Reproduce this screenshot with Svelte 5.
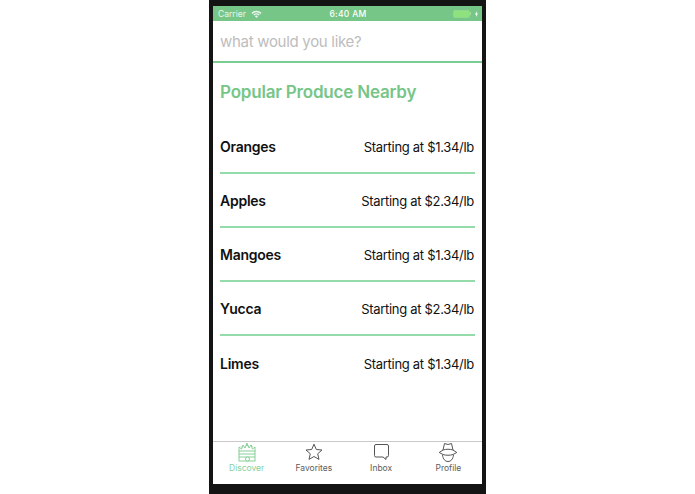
<script>
  const rows = [
    { name: 'Oranges', price: 'Starting at $1.34/lb' },
    { name: 'Apples', price: 'Starting at $2.34/lb' },
    { name: 'Mangoes', price: 'Starting at $1.34/lb' },
    { name: 'Yucca', price: 'Starting at $2.34/lb' },
    { name: 'Limes', price: 'Starting at $1.34/lb' }
  ];
</script>

<div class="page">
  <div class="phone">
    <div class="screen">
      <div class="status">
        <div class="st-left">
          <span>Carrier</span>
          <svg width="11" height="8" viewBox="0 0 11 8"><path d="M0.5 2.8a7 7 0 0 1 10 0L9.500 3.900a5.600 5.600 0 0 0-8 0zM2.200 4.600a4.600 4.600 0 0 1 6.600 0L7.800 5.600a3.200 3.200 0 0 0-4.600 0zM3.900 6.300a2.200 2.200 0 0 1 3.200 0L5.500 8z" fill="#fff"/></svg>
        </div>
        <span class="time">6:40 AM</span>
        <div class="st-right">
          <span class="batt"><span class="batt-fill"></span></span>
          <span class="nub"></span>
          <svg width="3" height="6" viewBox="0 0 3 6"><path d="M1.800 0L0 3.400h1.200L1 6l2-3.600H1.700z" fill="#fff"/></svg>
        </div>
      </div>
      <div class="search">what would you like?</div>
      <h1>Popular Produce Nearby</h1>
      <ul>
        {#each rows as r}
          <li><b>{r.name}</b><span>{r.price}</span></li>
        {/each}
      </ul>
      <nav>
        <div class="tab active">
          <svg width="20" height="20" viewBox="0 0 20 20" fill="none" stroke="#7cc98f" stroke-width="0.9"><path d="M2 9V5l2.500 2L6 3l2 3 2-5 2 5 2-3 1.500 4L18 5v4"/><path d="M4 4.500l1 1M9 3l2 1M14 3.500l1.500 1"/><rect x="2" y="9" width="16" height="10"/><path d="M2 12h16M2 15h16"/><circle cx="10.500" cy="17" r="2" fill="#fff"/></svg>
          <span>Discover</span>
        </div>
        <div class="tab">
          <svg width="18" height="18" viewBox="0 0 18 18" fill="none" stroke="#555" stroke-width="1"><path d="M9 1.200l2.300 5.300 5.700.5-4.300 3.800 1.300 5.600L9 13.500l-5 2.900 1.300-5.600L1 7l5.700-.5z" stroke-linejoin="round"/></svg>
          <span>Favorites</span>
        </div>
        <div class="tab">
          <svg width="17" height="18" viewBox="0 0 17 18" fill="none" stroke="#555" stroke-width="1"><path d="M3 1.500h11a1.500 1.500 0 0 1 1.500 1.500v9.500a1.500 1.500 0 0 1-1.500 1.500h-1v2.500l-3-2.500H3a1.500 1.500 0 0 1-1.500-1.500V3A1.500 1.500 0 0 1 3 1.500z" stroke-linejoin="round"/></svg>
          <span>Inbox</span>
        </div>
        <div class="tab">
          <svg width="20" height="20" viewBox="0 0 20 20" fill="none" stroke="#555" stroke-width="1"><path d="M5 8l1.500-6.500 3.500 1 3.500-1L15 8" stroke-linejoin="round"/><path d="M1.200 10.500L5 8c3-1 7-1 10 0l3.800 2.500L15 12.500c-3 1-7 1-10 0z" stroke-linejoin="round"/><path d="M4.500 13c.5 4 2.500 6.500 5.500 6.500s5-2.500 5.500-6.500"/></svg>
          <span>Profile</span>
        </div>
      </nav>
    </div>
  </div>
</div>

<style>
  :global(body) { margin: 0; background: #fff; }
  .page { width: 695px; height: 494px; display: flex; justify-content: center; overflow: hidden; background: #fff; font-family: Inter, "Liberation Sans", sans-serif; }
  .phone { width: 277px; height: 494px; background: #141414; padding: 6px 4px 10px; box-sizing: border-box; }
  .screen { height: 478px; background: #fff; display: flex; flex-direction: column; }
  .status { height: 15px; flex: none; background: #76c688; color: #fff; display: grid; grid-template-columns: 1fr auto 1fr; align-items: center; padding: 0 4px 0 5px; font-size: 8.500px; }
  .st-left { display: flex; gap: 5px; align-items: center; opacity: .85; }
  .time { font-weight: 500; letter-spacing: .3px; }
  .st-right { display: flex; justify-content: flex-end; align-items: center; }
  .batt { width: 15px; height: 6px; border: 1px solid #93d694; border-radius: 1.500px; display: block; }
  .batt-fill { display: block; height: 100%; background: #8ee27e; }
  .nub { width: 1px; height: 3px; background: #a5dc9a; margin-right: 4px; }
  .search { height: 42px; flex: none; box-sizing: border-box; border-bottom: 2px solid #7ccb90; padding: 0 7px; line-height: 41px; font-size: 15px; letter-spacing: -.3px; color: #bdbdbd; }
  h1 { margin: 0; padding: 17px 7px 0; height: 57px; flex: none; box-sizing: border-box; font-size: 17px; letter-spacing: -.2px; line-height: 24px; font-weight: 600; color: #76c688; }
  ul { list-style: none; margin: 0; padding: 0 7px; flex: 1; }
  li { height: 54px; box-sizing: border-box; display: flex; justify-content: space-between; align-items: center; border-bottom: 2px solid #95dbab; padding-top: 2px; color: #111; }
  li:last-child { border-bottom: 0; }
  li b { font-size: 14px; letter-spacing: -.25px; font-weight: 600; margin-top: -1px; }
  li span { font-size: 13px; letter-spacing: -.3px; font-weight: 400; margin-right: 1px; }
  nav { height: 43px; flex: none; box-sizing: border-box; border-top: 1px solid #c9c9c9; display: grid; grid-template-columns: repeat(4, 1fr); }
  .tab { display: flex; flex-direction: column; align-items: center; font-size: 8.500px; color: #5c5c5c; height: 41px; }
  .tab svg { height: 20px; display: block; margin-bottom: 1px; }
  .tab.active { color: #86d19b; }
</style>
